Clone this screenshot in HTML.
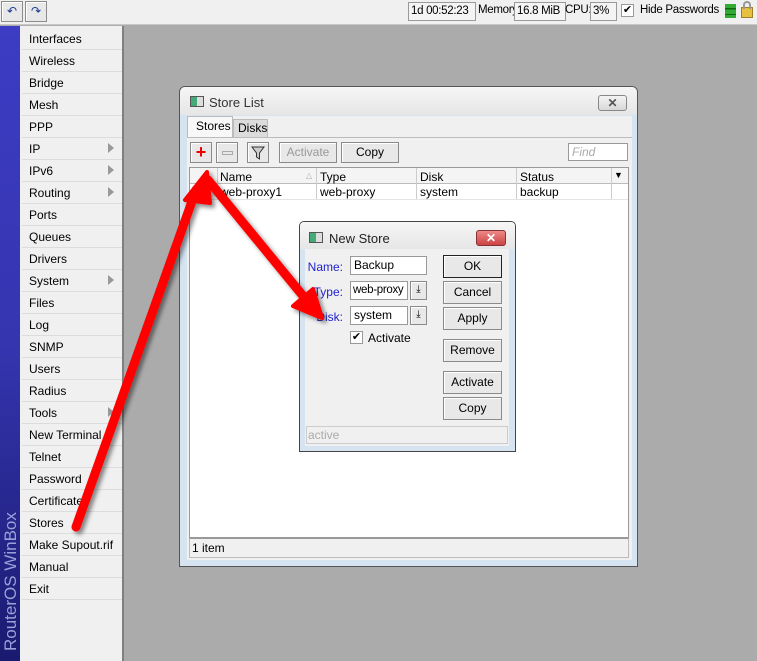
<!DOCTYPE html>
<html><head><meta charset="utf-8"><style>
*{box-sizing:border-box;margin:0;padding:0;white-space:nowrap}
body{width:757px;height:661px;overflow:hidden;background:#ababab;font-family:"Liberation Sans",sans-serif;font-size:12px;color:#000;position:relative}
.a{position:absolute}
.btn{position:absolute;border:1px solid #8a8a8a;background:#e8e8e8;text-align:center;font-size:12px;box-shadow:inset 1px 1px 0 #fff}
.inp{position:absolute;border:1px solid #999;background:#fff;padding-left:3px;font-size:12px;line-height:17px;overflow:hidden}
.mi{position:absolute;left:22px;width:100px;height:22px;border-bottom:1px solid #dcdcdc;padding-left:7px;line-height:22px;font-size:12px}
.tri{position:absolute;right:8px;top:5px;width:0;height:0;border-left:6px solid #999;border-top:5px solid transparent;border-bottom:5px solid transparent}
.lbl{position:absolute;color:#2222cc;text-align:right;width:40px;font-size:12px}
.tb{font-size:11.5px;letter-spacing:-0.3px}
</style></head><body>
<!-- top bar -->
<div class="a" style="left:0;top:0;width:757px;height:25px;background:#f0f0f0;border-bottom:1px solid #c8c8c8"></div>
<div class="btn" style="left:1px;top:1px;width:22px;height:21px;line-height:19px;color:#1a3a8a">&#x21B6;</div>
<div class="btn" style="left:25px;top:1px;width:22px;height:21px;line-height:19px;color:#1a3a8a">&#x21B7;</div>
<div class="inp tb" style="left:408px;top:2px;width:68px;height:19px;line-height:17px;background:#f4f4f4;padding-left:2px">1d 00:52:23</div>
<div class="a tb" style="left:478px;top:4px">Memory:</div>
<div class="inp tb" style="left:514px;top:2px;width:52px;height:19px;background:#f4f4f4;padding-left:2px">16.8 MiB</div>
<div class="a tb" style="left:565px;top:4px">CPU:</div>
<div class="inp tb" style="left:590px;top:2px;width:27px;height:19px;background:#f4f4f4;padding-left:2px">3%</div>
<div class="inp" style="left:621px;top:4px;width:13px;height:13px;line-height:11px;padding:0;text-align:center;font-size:11px">&#10004;</div>
<div class="a tb" style="left:640px;top:4px">Hide Passwords</div>
<div class="a" style="left:725px;top:4px;width:11px;height:14px;background:linear-gradient(#3a3 0 30%,#161 30% 40%,#3a3 40% 70%,#161 70% 80%,#3a3 80%)"></div>
<div class="a" style="left:741px;top:7px;width:12px;height:11px;background:#e8c040;border:1px solid #a08020"></div>
<div class="a" style="left:743px;top:1px;width:8px;height:8px;border:2px solid #999;border-bottom:none;border-radius:4px 4px 0 0"></div>
<!-- sidebar -->
<div class="a" style="left:0;top:26px;width:20px;height:635px;background:linear-gradient(#3c3cc4 0%,#3535b0 50%,#1a1a70 100%)"></div>
<div class="a" style="left:-64px;top:566px;width:150px;height:20px;transform:rotate(-90deg);color:#9aa0d8;font-size:17px;line-height:20px">RouterOS WinBox</div>
<div class="a" style="left:20px;top:26px;width:103px;height:635px;background:#f0f0f0"></div>
<div class="a" style="left:122px;top:26px;width:2px;height:635px;background:#808080"></div>
<div class="mi" style="top:28px">Interfaces</div>
<div class="mi" style="top:50px">Wireless</div>
<div class="mi" style="top:72px">Bridge</div>
<div class="mi" style="top:94px">Mesh</div>
<div class="mi" style="top:116px">PPP</div>
<div class="mi" style="top:138px">IP<span class="tri"></span></div>
<div class="mi" style="top:160px">IPv6<span class="tri"></span></div>
<div class="mi" style="top:182px">Routing<span class="tri"></span></div>
<div class="mi" style="top:204px">Ports</div>
<div class="mi" style="top:226px">Queues</div>
<div class="mi" style="top:248px">Drivers</div>
<div class="mi" style="top:270px">System<span class="tri"></span></div>
<div class="mi" style="top:292px">Files</div>
<div class="mi" style="top:314px">Log</div>
<div class="mi" style="top:336px">SNMP</div>
<div class="mi" style="top:358px">Users</div>
<div class="mi" style="top:380px">Radius</div>
<div class="mi" style="top:402px">Tools<span class="tri"></span></div>
<div class="mi" style="top:424px">New Terminal</div>
<div class="mi" style="top:446px">Telnet</div>
<div class="mi" style="top:468px">Password</div>
<div class="mi" style="top:490px">Certificates</div>
<div class="mi" style="top:512px">Stores</div>
<div class="mi" style="top:534px">Make Supout.rif</div>
<div class="mi" style="top:556px">Manual</div>
<div class="mi" style="top:578px">Exit</div>
<!-- Store List window -->
<div class="a" style="left:179px;top:86px;width:459px;height:481px;background:#d6e4f1;border:1px solid #555;border-radius:6px 6px 0 0"></div>
<div class="a" style="left:180px;top:87px;width:457px;height:28px;background:linear-gradient(#f6f6f6,#e6e6e6);border-radius:5px 5px 0 0"></div>
<div class="a" style="left:190px;top:96px;width:14px;height:11px;border:1px solid #555;background:linear-gradient(90deg,#4a7 0 50%,#ddd 50%)"></div>
<div class="a" style="left:209px;top:95px;font-size:13px;color:#333">Store List</div>
<div class="a" style="left:598px;top:95px;width:29px;height:16px;border:1px solid #888;border-radius:3px;background:linear-gradient(#f4f4f4,#d8d8d8);text-align:center;line-height:14px;font-weight:bold;color:#555">&#x2715;</div>
<div class="a" style="left:187px;top:116px;width:445px;height:444px;background:#f0f0f0"></div>
<div class="a" style="left:187px;top:116px;width:46px;height:21px;background:#f8f8f8;border:1px solid #bbb;border-bottom:none;line-height:19px;padding-left:8px">Stores</div>
<div class="a" style="left:233px;top:119px;width:35px;height:18px;background:#dcdcdc;border:1px solid #bbb;border-bottom:none;line-height:17px;padding-left:4px">Disks</div>
<div class="a" style="left:187px;top:137px;width:445px;height:1px;background:#bbb"></div>
<div class="btn" style="left:190px;top:142px;width:22px;height:21px;color:#e00;font-weight:bold;font-size:18px;line-height:18px">+</div>
<div class="btn" style="left:216px;top:142px;width:22px;height:21px"><div class="a" style="left:5px;top:8px;width:11px;height:4px;border:1px solid #aaa"></div></div>
<div class="btn" style="left:247px;top:142px;width:22px;height:21px"><svg width="20" height="19"><path d="M4 4h12l-4.5 6v6l-3-2v-4z" fill="#ccc" stroke="#333"/></svg></div>
<div class="btn" style="left:279px;top:142px;width:58px;height:21px;line-height:19px;color:#999">Activate</div>
<div class="btn" style="left:341px;top:142px;width:58px;height:21px;line-height:19px">Copy</div>
<div class="inp" style="left:568px;top:143px;width:60px;height:18px;color:#aaa;font-style:italic">Find</div>
<div class="a" style="left:189px;top:167px;width:440px;height:371px;background:#fff;border:1px solid #999"></div>
<div class="a" style="left:190px;top:168px;width:438px;height:16px;background:#f4f4f4;border-bottom:1px solid #bbb"></div>
<div class="a" style="left:217px;top:168px;width:1px;height:32px;background:#ccc"></div>
<div class="a" style="left:316px;top:168px;width:1px;height:32px;background:#ccc"></div>
<div class="a" style="left:416px;top:168px;width:1px;height:32px;background:#ccc"></div>
<div class="a" style="left:516px;top:168px;width:1px;height:32px;background:#ccc"></div>
<div class="a" style="left:611px;top:168px;width:1px;height:32px;background:#ccc"></div>
<div class="a" style="left:220px;top:170px">Name</div>
<div class="a" style="left:306px;top:171px;font-size:8px;color:#aaa">&#9651;</div>
<div class="a" style="left:320px;top:170px">Type</div>
<div class="a" style="left:420px;top:170px">Disk</div>
<div class="a" style="left:520px;top:170px">Status</div>
<div class="a" style="left:614px;top:170px;font-size:9px">&#9660;</div>
<div class="a" style="left:190px;top:199px;width:438px;height:1px;background:#e4e4e4"></div>
<div class="a" style="left:220px;top:185px">web-proxy1</div>
<div class="a" style="left:320px;top:185px">web-proxy</div>
<div class="a" style="left:420px;top:185px">system</div>
<div class="a" style="left:520px;top:185px">backup</div>
<div class="a" style="left:189px;top:538px;width:440px;height:20px;border:1px solid #bbb;border-top:1px solid #999;background:#f0f0f0;padding-left:2px;line-height:18px">1 item</div>
<!-- New Store dialog -->
<div class="a" style="left:299px;top:221px;width:217px;height:231px;background:#d6e4f1;border:1px solid #444;border-radius:5px 5px 0 0"></div>
<div class="a" style="left:300px;top:222px;width:215px;height:27px;background:linear-gradient(#f6f6f6,#e6e6e6);border-radius:4px 4px 0 0"></div>
<div class="a" style="left:309px;top:232px;width:14px;height:11px;border:1px solid #555;background:linear-gradient(90deg,#4a7 0 50%,#ddd 50%)"></div>
<div class="a" style="left:329px;top:231px;font-size:13px;color:#222">New Store</div>
<div class="a" style="left:476px;top:230px;width:30px;height:16px;border:1px solid #833;border-radius:3px;background:linear-gradient(#e88,#c44);text-align:center;line-height:14px;font-weight:bold;color:#fff">&#x2715;</div>
<div class="a" style="left:305px;top:249px;width:204px;height:197px;background:#f0f0f0"></div>
<div class="lbl" style="left:303px;top:260px">Name:</div>
<div class="inp" style="left:350px;top:256px;width:77px;height:19px">Backup</div>
<div class="lbl" style="left:303px;top:285px">Type:</div>
<div class="inp tb" style="left:350px;top:281px;width:58px;height:19px;padding-left:2px">web-proxy</div>
<div class="btn" style="left:410px;top:281px;width:17px;height:19px;font-size:10px;line-height:16px">&#x2913;</div>
<div class="lbl" style="left:303px;top:310px">Disk:</div>
<div class="inp" style="left:350px;top:306px;width:58px;height:19px">system</div>
<div class="btn" style="left:410px;top:306px;width:17px;height:19px;font-size:10px;line-height:16px">&#x2913;</div>
<div class="inp" style="left:350px;top:331px;width:13px;height:13px;padding:0;line-height:11px;text-align:center;font-size:11px">&#10004;</div>
<div class="a" style="left:368px;top:331px">Activate</div>
<div class="btn" style="left:443px;top:255px;width:59px;height:23px;line-height:21px;border:1px solid #222">OK</div>
<div class="btn" style="left:443px;top:281px;width:59px;height:23px;line-height:21px">Cancel</div>
<div class="btn" style="left:443px;top:307px;width:59px;height:23px;line-height:21px">Apply</div>
<div class="btn" style="left:443px;top:339px;width:59px;height:23px;line-height:21px">Remove</div>
<div class="btn" style="left:443px;top:371px;width:59px;height:23px;line-height:21px">Activate</div>
<div class="btn" style="left:443px;top:397px;width:59px;height:23px;line-height:21px">Copy</div>
<div class="a" style="left:306px;top:426px;width:202px;height:18px;border:1px solid #ccc;color:#aaa;line-height:16px;padding-left:1px">active</div>
<!-- arrows -->
<svg class="a" style="left:0;top:0" width="757" height="661">
<defs><filter id="s"><feDropShadow dx="3" dy="3" stdDeviation="2" flood-color="#000" flood-opacity=".45"/></filter></defs>
<g filter="url(#s)" fill="#f00" stroke="#f00" stroke-linecap="round" stroke-linejoin="round">
<path d="M76 527L196 190" stroke-width="9" fill="none"/>
<path d="M207 172L185 200L210 203Z" stroke-width="4"/>
<path d="M208 180L308 302" stroke-width="9" fill="none"/>
<path d="M322 318L293 306L313 289Z" stroke-width="4"/>
</g></svg>
</body></html>
